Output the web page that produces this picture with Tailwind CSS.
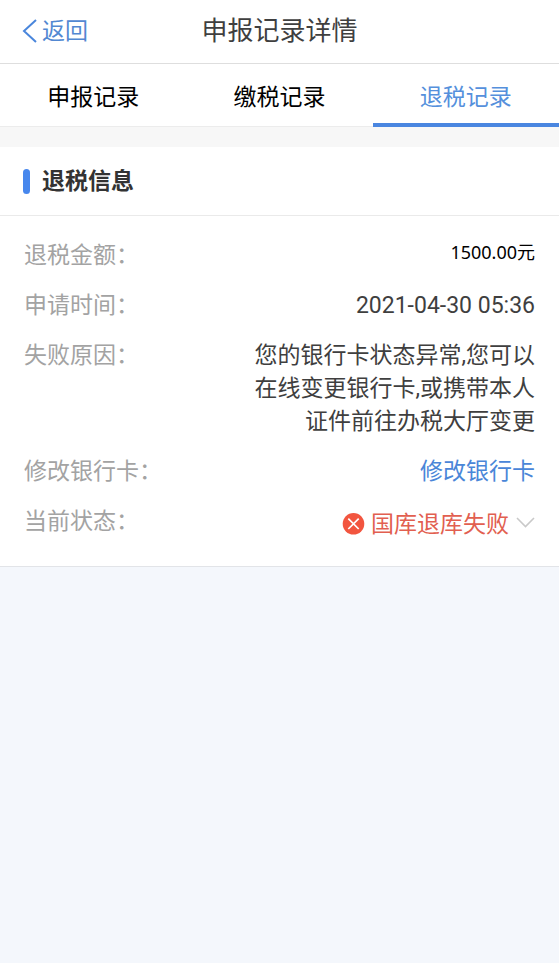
<!DOCTYPE html>
<html lang="zh-CN">
<head>
<meta charset="utf-8">
<meta name="viewport" content="width=device-width, initial-scale=1">
<title>申报记录详情</title>
<script src="https://cdn.jsdelivr.net/npm/@tailwindcss/browser@4"></script>
</head>
<body class="min-h-screen bg-[#f4f7fc] font-[Roboto,'Noto_Sans_CJK_SC',sans-serif] text-[23px] leading-[33px] text-[#3f3f3f]">
<header class="grid grid-cols-[1fr_auto_1fr] items-center border-b border-[#dedede] bg-white px-[22px] pt-[11px] pb-3">
  <a href="#" class="flex items-center gap-1 justify-self-start text-[#5288d2]">
    <svg class="h-6 w-4" viewBox="0 0 16 24" fill="none" stroke="#4a86dc" stroke-width="2" aria-hidden="true"><path d="M14 1 2 12l12 11"/></svg>
    <span>返回</span>
  </a>
  <h1 class="text-[26px] leading-10">申报记录详情</h1>
</header>
<nav class="grid grid-cols-3 bg-white text-center text-black">
  <a href="#" class="border-b border-[#ececec] pt-[17px] pb-3">申报记录</a>
  <a href="#" class="border-b border-[#ececec] pt-[17px] pb-3">缴税记录</a>
  <a href="#" aria-current="page" class="border-b-4 border-[#4a86e0] pt-[17px] pb-[9px] text-[#5590dc]">退税记录</a>
</nav>
<main class="border-b border-[#e2e4e8] bg-white">
  <div class="h-5 bg-[#f7f7f7]"></div>
  <div class="flex items-center gap-3 border-b border-[#eaeaea] px-[23px] pt-[18px] pb-[17px]">
    <span class="h-[25px] w-[7px] rounded-full bg-[#4787ed]"></span>
    <h2 class="font-bold text-[#333]">退税信息</h2>
  </div>
  <dl class="flex flex-col gap-[17px] px-6 pt-[23px] pb-[25px]">
    <div class="flex justify-between">
      <dt class="text-[#a3a3a3]">退税金额：</dt>
      <dd class="font-['Noto_Sans','Noto_Sans_CJK_SC',sans-serif] text-[18px] leading-[26px] text-black">1500.00元</dd>
    </div>
    <div class="flex justify-between">
      <dt class="text-[#a3a3a3]">申请时间：</dt>
      <dd>2021-04-30 05:36</dd>
    </div>
    <div class="flex justify-between">
      <dt class="text-[#a3a3a3]">失败原因：</dt>
      <dd class="max-w-[290px] text-right">您的银行卡状态异常,您可以在线变更银行卡,或携带本人证件前往办税大厅变更</dd>
    </div>
    <div class="flex justify-between">
      <dt class="text-[#a3a3a3]">修改银行卡：</dt>
      <dd><a href="#" class="text-[#4a86d8]">修改银行卡</a></dd>
    </div>
    <div class="flex justify-between">
      <dt class="text-[#a3a3a3]">当前状态：</dt>
      <dd class="pt-[3px]">
        <button type="button" class="flex items-center gap-[6px] text-[#e25f50]">
          <svg class="size-[23px]" viewBox="0 0 23 23" fill="none" aria-hidden="true"><circle cx="11.5" cy="10.8" r="10.8" fill="#f2553f"/><path d="m6.300 5.600 10.400 10.400M16.700 5.600 6.300 16" stroke="#fff" stroke-width="1.7"/></svg>
          <span>国库退库失败</span>
          <svg class="mb-1 h-3 w-5" viewBox="0 0 20 12" fill="none" stroke="#c9c9c9" stroke-width="1.6" aria-hidden="true"><path d="m2 1 8.500 8.500L19 1"/></svg>
        </button>
      </dd>
    </div>
  </dl>
</main>
</body>
</html>
